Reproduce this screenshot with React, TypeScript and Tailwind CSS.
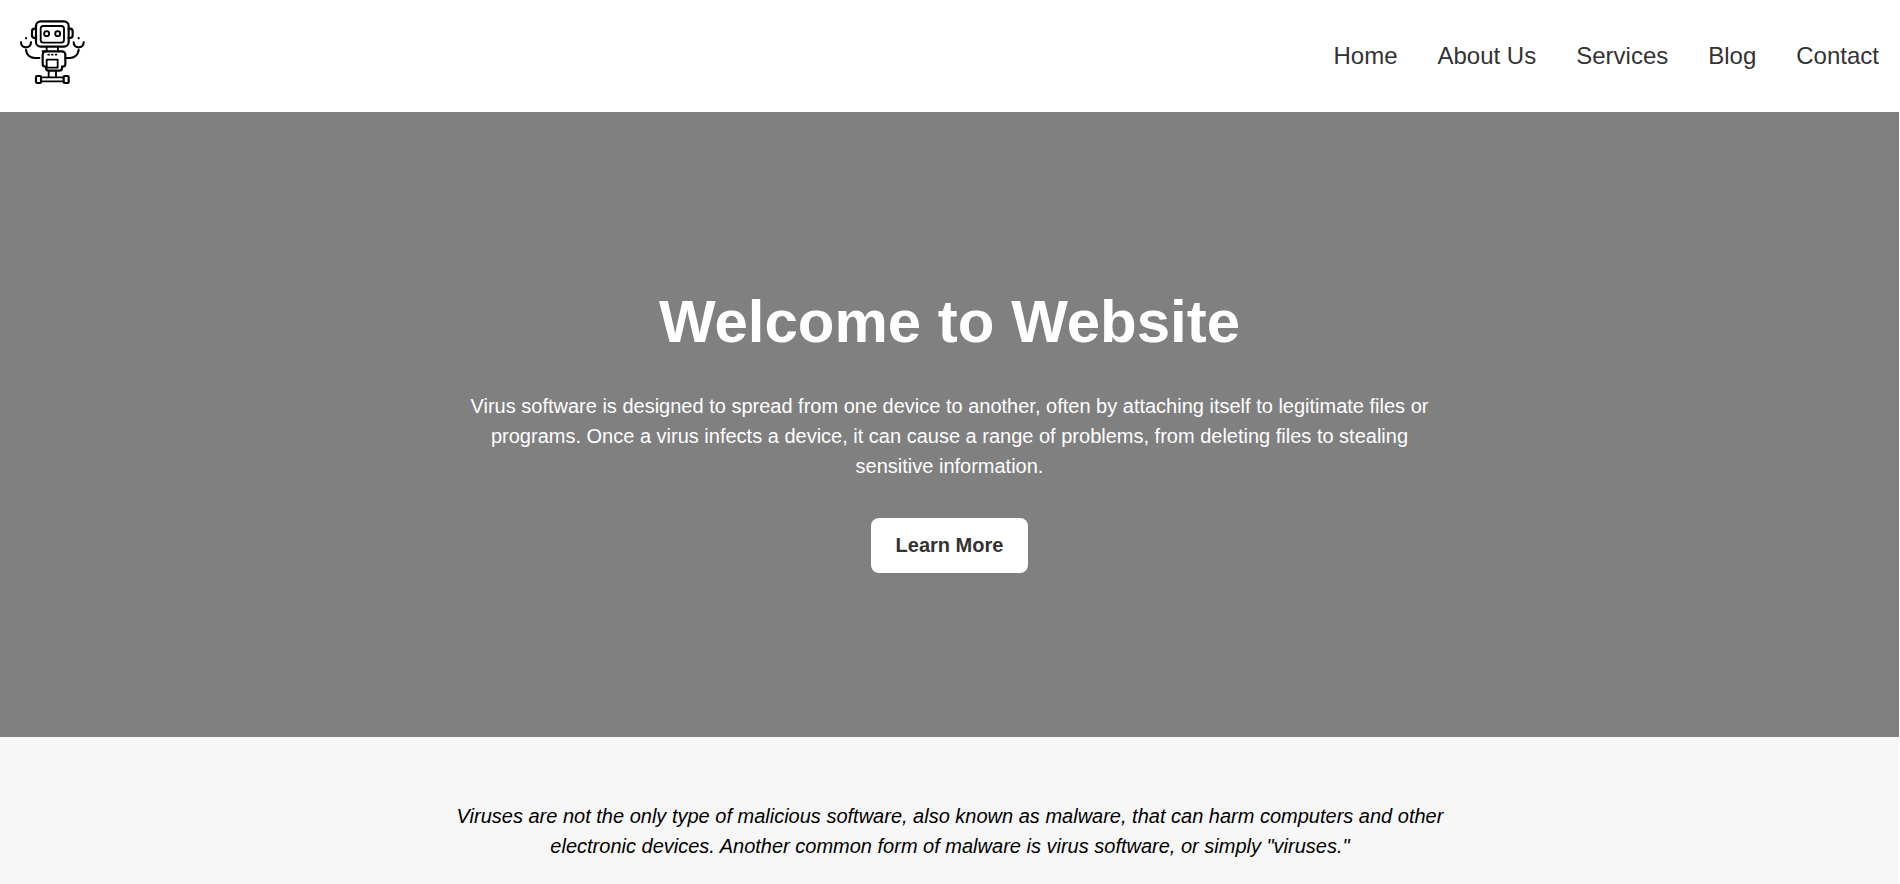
import React from 'react';

const navLinks = ['Home', 'About Us', 'Services', 'Blog', 'Contact'];

const RobotLogo: React.FC = () => (
  <svg className="mb-[8px]" width="66" height="66" viewBox="57 57 198 198" fill="none" stroke="#000" strokeWidth="6.5" strokeLinejoin="round" strokeLinecap="round">
    {/* head */}
    <rect x="108" y="64" width="98" height="76" rx="14" />
    <rect x="122" y="78" width="70" height="50" rx="8" strokeWidth="5.500" />
    <path d="M108 86h-4a8 8 0 0 0-8 8v12a8 8 0 0 0 8 8h4M206 86h4a8 8 0 0 1 8 8v12a8 8 0 0 1-8 8h-4" />
    <circle cx="140" cy="101" r="7.500" strokeWidth="5.500" />
    <circle cx="173" cy="101" r="7.500" strokeWidth="5.500" />
    {/* neck */}
    <path d="M140 140v14M174 140v14" strokeWidth="5.500" />
    {/* body */}
    <path d="M128 154h58a10 10 0 0 1 10 10v28a8 8 0 0 1-8 8h-2v4a8 8 0 0 1-8 8h-32a8 8 0 0 1-8-8v-4h-2a8 8 0 0 1-8-8v-28a10 10 0 0 1 10-10z" />
    <rect x="140" y="179" width="33" height="24" strokeWidth="5.500" />
    <path d="M145 164h2M156 164h2M167 164h2" strokeWidth="5.500" />
    {/* arms */}
    <path d="M118 174h-14c-12 0-24-8-26-24" />
    <path d="M196 174h14c12 0 24-8 26-24" />
    <path d="M63 127a15 15 0 0 0 30 0M221 127a15 15 0 0 0 30 0" />
    <path d="M78 114v1M236 114v1" />
    {/* base */}
    <path d="M146 212v18M168 212v18" strokeWidth="5.500" />
    <rect x="108" y="228" width="15" height="21" rx="3" />
    <rect x="191" y="228" width="15" height="21" rx="3" />
    <path d="M123 232h68M123 244h68" strokeWidth="5.500" />
  </svg>
);

export default function App() {
  return (
    <div className="w-[1899px] bg-white font-['Liberation_Sans',Arial,sans-serif]">
      <header className="flex h-[112px] items-center justify-between pl-[19px] pr-[20px] bg-white">
        <RobotLogo />
        <nav className="flex gap-[40px] pb-[1px]">
          {navLinks.map((link) => (
            <a key={link} href="#" className="text-[24px] leading-[28px] text-[#333333]">
              {link}
            </a>
          ))}
        </nav>
      </header>

      {/* Hero */}
      <section className="flex h-[625px] flex-col items-center bg-[#808080] pt-[175px] text-center text-white">
        <h1 className="text-[60px] font-bold leading-[69px]">Welcome to Website</h1>
        <p className="mt-[35px] w-[960px] text-[20px] leading-[30px]">
          Virus software is designed to spread from one device to another, often by attaching itself to legitimate files or programs. Once a virus infects a device, it can cause a range of problems, from deleting files to stealing sensitive information.
        </p>
        <a href="#" className="mt-[37px] rounded-[8px] bg-white px-[25px] py-[16px] text-[20px] font-bold leading-[23px] text-[#333333]">
          Learn More
        </a>
      </section>

      {/* Intro */}
      <section className="flex h-[147px] flex-col items-center bg-[#f7f7f7] pt-[64px] text-center">
        <p className="ml-[1px] w-[1000px] text-[20px] italic leading-[30px] text-black">
          Viruses are not the only type of malicious software, also known as malware, that can harm computers and other electronic devices. Another common form of malware is virus software, or simply "viruses."
        </p>
      </section>
    </div>
  );
}
